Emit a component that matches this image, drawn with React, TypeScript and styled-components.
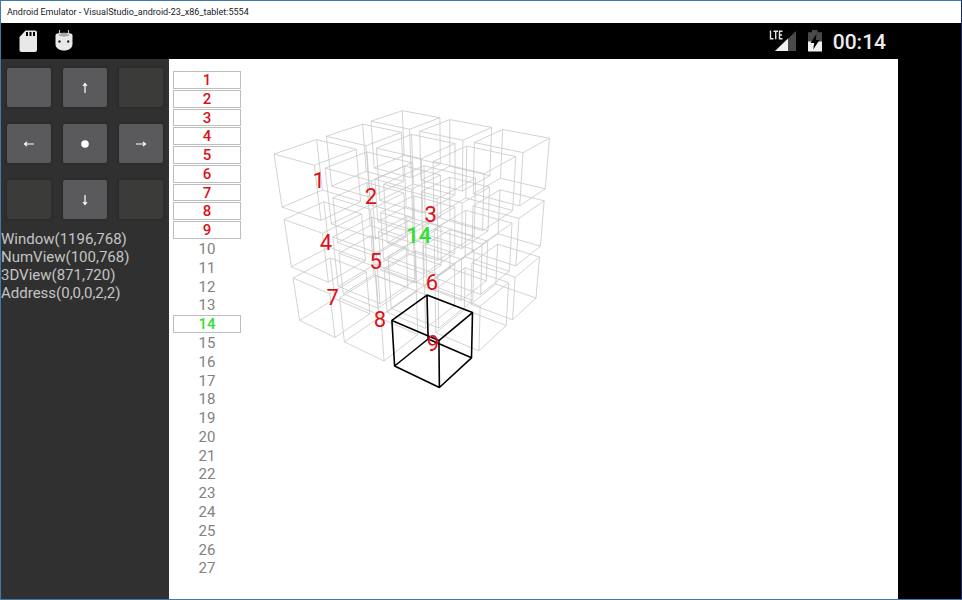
import React from "react";
import styled, { createGlobalStyle, css } from "styled-components";

const GlobalStyle = createGlobalStyle`
  * { box-sizing: border-box; }
  body { margin: 0; background: #000; font-family: Roboto, "Noto Sans", sans-serif; }
`;

const EmulatorWindow = styled.div`
  display: flex;
  flex-direction: column;
  min-height: 100vh;
  border: 1px solid #3f7ba6;
  border-right-color: #14286e;
  background: #000;
`;

const TitleBar = styled.header`
  flex: none;
  height: 22px;
  padding: 0 6px;
  background: #fff;
  color: #1a1a1a;
  font: 9px/22px Roboto, sans-serif;
  white-space: nowrap;
`;

const Device = styled.div`
  flex: 1;
  display: flex;
`;

const Screen = styled.div`
  flex: 1;
  min-width: 0;
  display: flex;
  flex-direction: column;
`;

const NavigationStrip = styled.aside`
  flex: none;
  width: 63px;
  background: #000;
`;

const StatusBar = styled.div`
  flex: none;
  height: 36px;
  display: flex;
  justify-content: space-between;
  align-items: center;
  padding: 0 12px 0 18px;
  color: #ededed;
`;

const StatusGroup = styled.div<{ $gap: number }>`
  display: flex;
  align-items: center;
  gap: ${(p) => p.$gap}px;
`;

const Clock = styled.time`
  padding-top: 2px;
  font-size: 21px;
  line-height: 34px;
  font-weight: 500;
`;

const AppBody = styled.main`
  flex: 1;
  display: flex;
  background: #fff;
`;

const Sidebar = styled.section`
  flex: none;
  width: 168px;
  background: #303030;
`;

const Pad = styled.div`
  display: grid;
  grid-template-columns: repeat(3, 44px);
  grid-auto-rows: 39px;
  gap: 17px 12px;
  padding: 9px 6px 11px;
`;

const PadButton = styled.button`
  display: flex;
  align-items: center;
  justify-content: center;
  padding: 0;
  border: 0;
  border-radius: 2px;
  background: #5a5a5c;
  color: #fff;
  box-shadow: 0 0 2px 1px #2a2a2a;

  &:disabled {
    background: #3b3b39;
  }
`;

const Info = styled.div`
  color: #c4c4c4;
  font-size: 15px;
  line-height: 18px;
  white-space: nowrap;
`;

const InfoLine = styled.p`
  margin: 0;
`;

const NumberList = styled.div`
  flex: none;
  width: 76px;
  height: 507px;
  margin-top: 12px;
  padding: 0 4px;
  display: flex;
  flex-direction: column;
`;

type Tone = "red" | "green" | "none";

const toneColor: Record<Tone, string> = {
  red: "#dc1018",
  green: "#2fe02f",
  none: "#828282",
};

const NumberButton = styled.button<{ $tone: Tone }>`
  flex: 1;
  min-height: 0;
  margin: 0 0 1px;
  padding: 0;
  border: 1px solid transparent;
  background: transparent;
  color: ${(p) => toneColor[p.$tone]};
  font: 400 15px/17px Roboto, sans-serif;

  ${(p) =>
    p.$tone !== "none" &&
    css`
      border-color: #bdbdbd;
      background: #fff;
      font-weight: 500;
    `}
`;

const Viewport = styled.section`
  flex: 1;
  min-width: 0;
  display: flex;
`;

const Drawing = styled.svg`
  flex: 1;
  min-width: 0;
  height: 540px;
`;

const CubeEdges = styled.path<{ $active: boolean }>`
  fill: none;
  stroke: ${(p) => (p.$active ? "#000" : "#c8c8c8")};
  stroke-width: ${(p) => (p.$active ? 1.6 : 0.8)};
  stroke-linejoin: round;
`;

const CubeLabel = styled.text<{ $tone: Tone }>`
  fill: ${(p) => toneColor[p.$tone]};
  font: ${(p) => (p.$tone === "green" ? 500 : 400)} 22px Roboto, sans-serif;
  text-anchor: middle;
`;

/* Perspective camera: maps lattice space to drawing units. */
const CAMERA = {
  u: [41.069, 11.32, 53.442, 176.765],
  v: [6.45, 67.36, -9.828, 174.574],
  w: [-0.05669, 0.05423, 0.07767, 1],
};

type Point3 = [number, number, number];

const project = ([x, y, z]: Point3): [number, number] => {
  const along = (r: number[]) => r[0] * x + r[1] * y + r[2] * z + r[3];
  const depth = along(CAMERA.w);
  return [along(CAMERA.u) / depth, along(CAMERA.v) / depth];
};

const HALF = 0.4;

const cubePath = ([cx, cy, cz]: Point3) => {
  const at = (dx: number, dy: number, dz: number) =>
    project([cx + dx * HALF, cy + dy * HALF, cz + dz * HALF])
      .map((n) => n.toFixed(1))
      .join(" ");
  const ring = (dy: number) =>
    `M${at(-1, dy, -1)}L${at(1, dy, -1)}L${at(1, dy, 1)}L${at(-1, dy, 1)}Z`;
  const posts = [[-1, -1], [1, -1], [1, 1], [-1, 1]]
    .map(([dx, dz]) => `M${at(dx, -1, dz)}L${at(dx, 1, dz)}`)
    .join("");
  return ring(-1) + ring(1) + posts;
};

const numbers = Array.from({ length: 27 }, (_, i) => i + 1);

const centerOf = (n: number): Point3 => {
  const i = n - 1;
  return [(i % 3) - 1, (Math.floor(i / 3) % 3) - 1, Math.floor(i / 9) - 1];
};

const toneOf = (n: number): Tone => (n <= 9 ? "red" : n === 14 ? "green" : "none");

const ACTIVE = 9;

const SdCardIcon = () => (
  <svg width="18" height="22" viewBox="0 0 18 22" aria-label="SD card">
    <path
      fill="#e8e8e8"
      fillRule="evenodd"
      d="M6.5 0.5H16a2 2 0 0 1 2 2V20a2 2 0 0 1-2 2H2.500a2 2 0 0 1-2-2V7ZM7 2v4h2V2ZM10.500 2v4h2V2ZM14 2v4h2V2Z"
    />
  </svg>
);

const AndroidIcon = () => (
  <svg width="18" height="22" viewBox="0 0 18 22" aria-label="Android debugging">
    <path d="M4.500 0v4M13.500 0v4" stroke="#bdbdbd" strokeWidth="1.200" fill="none" />
    <path d="M0.500 5.500Q0.500 4 2 3.500Q9 2 16 3.500Q17.500 4 17.500 5.500V14c0 4-3.500 6.500-8.500 6.500S0.500 18 0.500 14Z" fill="#e8e8e8" />
    <path d="M3.500 5C5 3.500 7 3 9 3s4 .5 5.500 2c-3 2-8 2-11 0Z" fill="#a8a8a8" />
    <circle cx="4.500" cy="11.500" r="1.200" fill="#222" />
    <circle cx="13.200" cy="11.500" r="1.200" fill="#222" />
  </svg>
);

const SignalIcon = () => (
  <svg width="28" height="24" viewBox="0 0 28 24" aria-label="LTE signal">
    <path d="M27 2v20H6Z" fill="#4a4a4a" />
    <path d="M19 9.600V22H6Z" fill="#f0f0f0" />
    <path d="M1 1h13v9.500H1Z" fill="#000" />
    <path
      d="M1.500 1.500v8.300h3M4.500 2.200h4.500M6.700 2v8.300M13.500 2.200h-3v7.600h3M10.500 6h2.600"
      stroke="#e4e4e4"
      strokeWidth="1.400"
      fill="none"
    />
  </svg>
);

const BatteryIcon = () => (
  <svg width="16" height="24" viewBox="0 0 16 24" aria-label="Battery charging">
    <path d="M5 1h5.500v2.200H15V13H1V3.200h4Z" fill="#4a4a4a" />
    <path d="M1 12.500h14V22.500H1Z" fill="#f0f0f0" />
    <path d="M9.500 5 3.500 14H7.200l-1 6.500L12.500 11H8.800Z" fill="#000" />
  </svg>
);

type Direction = "up" | "down" | "left" | "right";

const turn: Record<Direction, number> = { up: 0, right: 90, down: 180, left: 270 };

const Arrow = ({ to }: { to: Direction }) => (
  <svg width="12" height="12" viewBox="0 0 12 12" aria-hidden="true">
    <path
      d="M6 11V2M4 4 6 1.500l2 2.500"
      transform={`rotate(${turn[to]} 6 6)`}
      stroke="#fff"
      strokeWidth="1.200"
      fill="none"
    />
  </svg>
);

const Dot = () => (
  <svg width="8" height="8" viewBox="0 0 8 8" aria-hidden="true">
    <circle cx="4" cy="4" r="3.800" fill="#fff" />
  </svg>
);

const pad: { label: string; face?: React.ReactNode; disabled?: boolean }[] = [
  { label: "Blank" },
  { label: "Up", face: <Arrow to="up" /> },
  { label: "Unused top right", disabled: true },
  { label: "Left", face: <Arrow to="left" /> },
  { label: "Center", face: <Dot /> },
  { label: "Right", face: <Arrow to="right" /> },
  { label: "Unused bottom left", disabled: true },
  { label: "Down", face: <Arrow to="down" /> },
  { label: "Unused bottom right", disabled: true },
];

const infoLines = [
  "Window(1196,768)",
  "NumView(100,768)",
  "3DView(871,720)",
  "Address(0,0,0,2,2)",
];

export default function App() {
  const drawOrder = numbers.filter((n) => n !== ACTIVE).concat(ACTIVE);
  return (
    <>
      <GlobalStyle />
      <EmulatorWindow>
        <TitleBar>Android Emulator - VisualStudio_android-23_x86_tablet:5554</TitleBar>
        <Device>
          <Screen>
            <StatusBar>
              <StatusGroup $gap={18}>
                <SdCardIcon />
                <AndroidIcon />
              </StatusGroup>
              <StatusGroup $gap={10}>
                <SignalIcon />
                <BatteryIcon />
                <Clock>00:14</Clock>
              </StatusGroup>
            </StatusBar>
            <AppBody>
              <Sidebar>
                <Pad>
                  {pad.map((b) => (
                    <PadButton key={b.label} type="button" aria-label={b.label} disabled={b.disabled}>
                      {b.face}
                    </PadButton>
                  ))}
                </Pad>
                <Info>
                  {infoLines.map((line) => (
                    <InfoLine key={line}>{line}</InfoLine>
                  ))}
                </Info>
              </Sidebar>
              <NumberList>
                {numbers.map((n) => (
                  <NumberButton key={n} type="button" $tone={toneOf(n)}>
                    {n}
                  </NumberButton>
                ))}
              </NumberList>
              <Viewport>
                <Drawing viewBox="3 0 653 540" preserveAspectRatio="xMinYMin meet">
                  {drawOrder.map((n) => (
                    <CubeEdges key={n} $active={n === ACTIVE} d={cubePath(centerOf(n))} />
                  ))}
                  {numbers
                    .filter((n) => toneOf(n) !== "none")
                    .map((n) => {
                      const center = centerOf(n);
                      const [x, y] = project(center);
                      const baseline = y + 10 + center[0] - center[2] - 1;
                      return (
                        <CubeLabel key={n} $tone={toneOf(n)} x={x} y={baseline}>
                          {n}
                        </CubeLabel>
                      );
                    })}
                </Drawing>
              </Viewport>
            </AppBody>
          </Screen>
          <NavigationStrip />
        </Device>
      </EmulatorWindow>
    </>
  );
}
